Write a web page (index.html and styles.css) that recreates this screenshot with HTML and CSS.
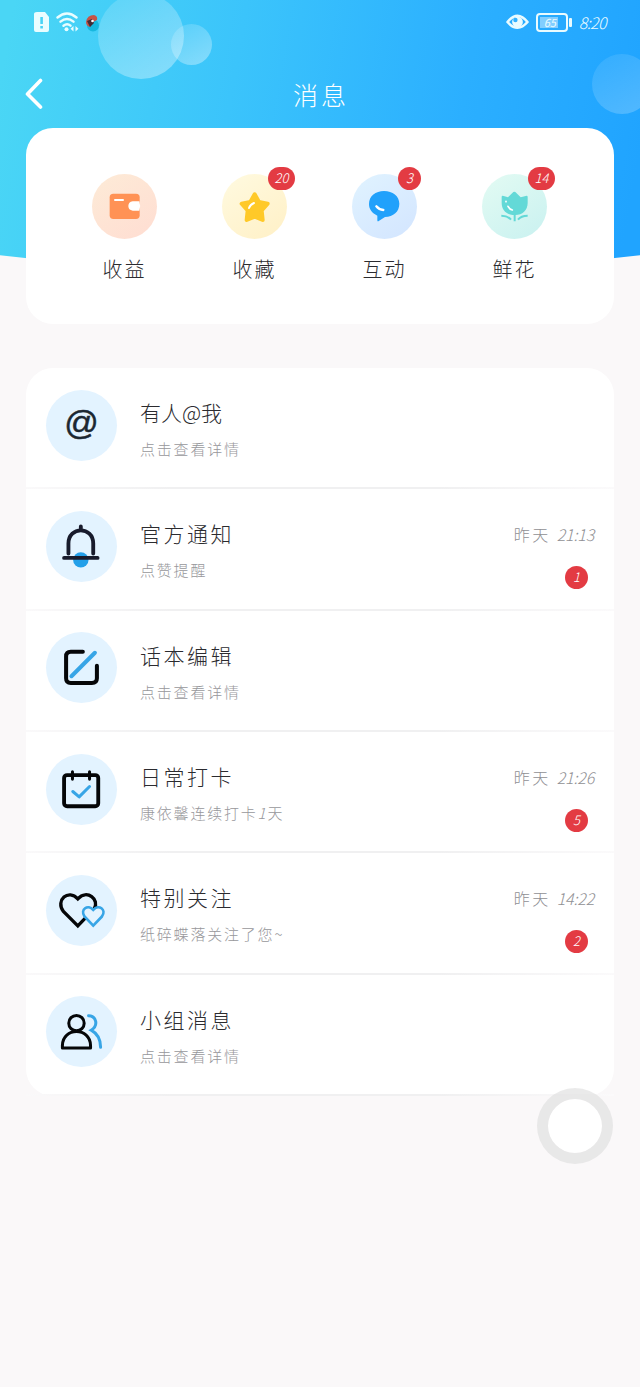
FILE: index.html
```
<!DOCTYPE html>
<html lang="zh-CN">
<head>
<meta charset="utf-8">
<title>消息</title>
<link rel="stylesheet" href="styles.css">
</head>
<body>
<div class="page">
  <div class="backdrop">
    <i class="bubble bubble-big"></i><i class="bubble bubble-small"></i><i class="bubble bubble-right"></i>
  </div>
  <div class="status">
    <svg class="status-left" width="70" height="24" viewBox="0 0 70 24">
      <path fill="#e9fdff" fill-rule="evenodd" d="M4 2h8l4 5v13q0 2-2 2H3q-2 0-2-2V4q0-2 3-2zM7.300 7v7h2.600V7zM7.300 16v2.600h2.600V16z"/>
      <g fill="none" stroke="#e9fdff" stroke-width="2.400" stroke-linecap="round"><path d="M24.500 7.500q9.500-8 19 0M27.500 11.700q6.500-5.600 13 0M30.500 15.700q3.700-3 7 0"/></g>
      <circle cx="33.500" cy="19.200" r="2" fill="#e9fdff"/><path fill="#e9fdff" d="M40.500 16v5.500l-3-2.700zM42.500 16v5.500l3-2.700z"/>
      <circle cx="60" cy="15.500" r="6" fill="#17b8df"/><path fill="#c65448" d="M53 12q1-7 8-7 4 1 3 5l-4 2-3 5q-4-1-4-5z"/><path fill="#442b36" d="M54 11l5-2 2 4-4 4z"/><circle cx="59.500" cy="11" r="1.300" fill="#fff"/>
    </svg>
    <div class="status-right">
      <svg width="23" height="16" viewBox="0 0 23 16"><path fill="none" stroke="#e9fbff" stroke-width="2.600" stroke-linejoin="round" d="M1.500 8Q11.500-4.500 21.500 8 11.500 19.500 1.500 8z"/><circle cx="11.500" cy="8" r="5.400" fill="#e9fbff"/><circle cx="9.400" cy="6" r="2.200" fill="#32b0ff"/></svg>
      <span class="battery"><b>65</b></span>
      <span class="clock">8:20</span>
    </div>
  </div>
  <header class="navbar">
    <svg width="18" height="32" viewBox="0 0 18 32"><path d="M15.500 2.500L2.500 16l13 13" fill="none" stroke="#fff" stroke-width="3.600" stroke-linecap="round" stroke-linejoin="round"/></svg>
    <h1>消息</h1>
  </header>
  <nav class="shortcuts">
    <a class="shortcut"><span class="disc peach"><svg viewBox="38 42 195 195"><rect x="91" y="101" width="90" height="76" rx="11" fill="#ff9255"/><path d="M107 120h24" stroke="#fff" stroke-width="6" stroke-linecap="round"/><path fill="#fff" d="M160 124h20q5 14 0 28h-20q-13-2-13-14t13-14z"/></svg></span><span class="label">收益</span></a>
    <a class="shortcut"><span class="disc yellow"><svg viewBox="427 42 195 195"><path d="M525 103l13 23 26 5-18 20 3 29-24-10-24 10 3-29-18-20 26-5z" fill="#ffc928" stroke="#ffc928" stroke-width="12" stroke-linejoin="round"/><path d="M508 144q4-11 15-15" fill="none" stroke="#fff" stroke-width="6" stroke-linecap="round"/></svg><em class="badge wide">20</em></span><span class="label">收藏</span></a>
    <a class="shortcut"><span class="disc blue"><svg viewBox="38 42 195 195"><path d="M134 93c26 0 46 15 46 38 0 24-18 39-43 40l-20 13q-3 1-3-3v-14c-16-8-25-19-25-35 0-24 20-39 45-39z" fill="#21a1fb"/><path d="M111 139q8 10 21 11" fill="none" stroke="#fff" stroke-width="7" stroke-linecap="round"/></svg><em class="badge">3</em></span><span class="label">互动</span></a>
    <a class="shortcut"><span class="disc mint"><svg viewBox="428 42 195 195"><path d="M487 111q0-6 6-3l13 4 16-16q3-2 6 0l16 16 15-4q6-2 6 3v18c0 22-16 36-37 36h-4-4c-20-2-33-16-33-36z" fill="#63d9d7"/><path d="M506 139q5 9 13 11M500 124v1" fill="none" stroke="#fff" stroke-width="5" stroke-linecap="round"/><path d="M526 160v24M486 167q19 0 29 12M565 167q-20 0-29 12" fill="none" stroke="#63d9d7" stroke-width="6"/></svg><em class="badge wide">14</em></span><span class="label">鲜花</span></a>
  </nav>
  <main class="list">
    <section class="row"><span class="avatar at">@</span><div class="body"><h2>有人@我</h2><p>点击查看详情</p></div></section>
    <section class="row"><span class="avatar"><svg viewBox="50 63 212 212"><circle cx="154" cy="209" r="23" fill="#239fe9"/><g fill="none" stroke="#181b2c" stroke-width="11.500" stroke-linecap="round"><path d="M117 190v-30c0-52 74-52 74 0v30M154 109v10M104 203h100"/></g></svg></span><div class="body"><h2>官方通知</h2><p>点赞提醒</p></div><div class="meta"><time>昨天 <i>21:13</i></time><em class="badge">1</em></div></section>
    <section class="row"><span class="avatar"><svg viewBox="50 36 212 212"><g fill="none" stroke-width="12" stroke-linecap="round" stroke-linejoin="round"><path stroke="#050608" d="M160 95h-36q-14 0-14 14v65q0 14 14 14h63q15 0 15-14v-37"/><path stroke="#38a5e6" d="M126 168l70-70"/></g></svg></span><div class="body"><h2>话本编辑</h2><p>点击查看详情</p></div></section>
    <section class="row"><span class="avatar"><svg viewBox="50 401 212 212"><g fill="none" stroke-width="11.500" stroke-linecap="round" stroke-linejoin="round"><rect x="104" y="464" width="102" height="93" rx="9" stroke="#050608"/><path stroke="#050608" stroke-width="9" d="M129 454v22M180 454v22"/><path stroke="#38a5e6" stroke-width="9" d="M130 513l19 16 31-31"/></g></svg></span><div class="body"><h2>日常打卡</h2><p>康依馨连续打卡<i>1</i>天</p></div><div class="meta"><time>昨天 <i>21:26</i></time><em class="badge">5</em></div></section>
    <section class="row"><span class="avatar"><svg viewBox="50 43 212 212"><path fill="none" stroke="#050608" stroke-width="10" d="M145 195l-43-43c-25-33 15-69 43-38 28-30 66 3 49 30z"/><path fill="#e5f4ff" stroke="#38a5e6" stroke-width="8" d="M191 194l-26-27c-14-21 10-38 26-20 16-18 41-1 26 20z"/></svg></span><div class="body"><h2>特别关注</h2><p>纸碎蝶落关注了您~</p></div><div class="meta"><time>昨天 <i>14:22</i></time><em class="badge">2</em></div></section>
    <section class="row"><span class="avatar"><svg viewBox="50 408 212 212"><g fill="none" stroke="#050608" stroke-width="9"><circle cx="141" cy="489" r="23"/><path stroke-linejoin="round" d="M99 563v-7c0-56 84-56 84 0v7z"/></g><path fill="none" stroke="#38a5e6" stroke-width="9" stroke-linecap="round" d="M177 467c24 1 30 29 8 43 20 11 28 27 28 51"/></svg></span><div class="body"><h2>小组消息</h2><p>点击查看详情</p></div></section>
  </main>
  <div class="assist"></div>
</div>
</body>
</html>
```
FILE: styles.css
```
* { box-sizing: border-box; margin: 0; padding: 0; }
body { background: #faf8f9; font-family: "Noto Sans CJK SC", sans-serif; font-weight: 300; color: #2b2b2f; }
.page { position: relative; height: 1387px; overflow: hidden; padding: 0 26px; }
svg { display: block; }
i, em { font-style: italic; }

.backdrop { position: absolute; inset: 0 0 auto 0; height: 273px; overflow: hidden; background: linear-gradient(100deg, #4ad6f5 2%, #3bc4fb 36%, #2bafff 70%, #20a4ff 97%); clip-path: ellipse(900px 273px at 50% 0); }
.bubble { position: absolute; border-radius: 50%; background: linear-gradient(150deg, rgba(255,255,255,.12), rgba(255,255,255,.38)); }
.bubble-big { left: 98px; top: -7px; width: 86px; height: 86px; }
.bubble-small { left: 171px; top: 24px; width: 41px; height: 41px; }
.bubble-right { left: 592px; top: 54px; width: 60px; height: 60px; opacity: .6; }

.status { position: relative; height: 44px; padding: 0 8px 0 7px; display: flex; align-items: center; justify-content: space-between; color: #e9fbff; }
.status-right { display: flex; align-items: center; }
.battery { position: relative; width: 32px; height: 19px; margin: 0 11px 0 7px; padding: 2px; border: 2px solid #e9fbff; border-radius: 4px; }
.battery::after { content: ""; position: absolute; right: -6px; top: 3px; width: 3px; height: 9px; border-radius: 1px; background: #e9fbff; }
.battery b { display: block; width: 18px; height: 11px; padding-left: 4px; background: #82ceff; font: italic 400 11px/11px "Noto Sans CJK SC", sans-serif; }
.clock { font-size: 16px; font-style: italic; line-height: 20px; letter-spacing: -.6px; }

.navbar { position: relative; height: 84px; display: flex; align-items: center; }
.navbar svg { margin-top: 16px; margin-left: -1px; }
.navbar h1 { flex: 1; margin: 16px 15px 0 0; text-align: center; font-size: 25px; line-height: 34px; font-weight: 300; letter-spacing: 3px; color: #fff; }

.shortcuts { position: relative; height: 196px; padding: 46px 33.500px 0; display: grid; grid-template-columns: repeat(4, 130px); border-radius: 27px; background: #fff; }
.shortcut { display: flex; flex-direction: column; align-items: center; }
.disc { position: relative; width: 65px; height: 65px; border-radius: 50%; }
.disc svg { width: 65px; height: 65px; }
.peach { background: linear-gradient(145deg, #fdebd7, #ffddd2); }
.yellow { background: linear-gradient(145deg, #fffae0, #fff0c6); }
.blue { background: linear-gradient(145deg, #e0f3ff, #d3e5ff); }
.mint { background: linear-gradient(145deg, #e3fbf3, #c9f1f0); }
.label { margin-top: 16px; font-size: 20px; line-height: 28px; letter-spacing: 2px; }
.badge { width: 23px; height: 23px; border-radius: 12px; background: #e33b43; color: #fff; font-size: 13px; line-height: 22px; text-align: center; }
.badge.wide { width: 27px; }
.disc .badge { position: absolute; left: 46px; top: -7px; }

.list { position: relative; height: 728px; margin-top: 44px; display: grid; grid-template-rows: repeat(6, 1fr); border-radius: 27px; background: #fff; }
.row { padding: 0 20px; display: flex; border-bottom: 2px solid transparent; border-image: linear-gradient(90deg, #faf9fa, #f0f0f1 25%, #f0f0f1 70%, #fbfafb) 1; border-width: 0 0 2px; }
.avatar { width: 71px; height: 71px; margin-top: 21.500px; flex: none; border-radius: 50%; background: #e3f3ff; }
.avatar svg { width: 71px; height: 71px; }
.at { font: 400 34px/65px "Liberation Sans", sans-serif; text-align: center; color: #1b2731; -webkit-text-stroke: .5px #1b2731; }
.body { flex: 1; padding: 29px 0 0 23px; }
.body h2 { font-size: 21px; line-height: 30px; font-weight: 300; letter-spacing: 2.500px; }
.body p { margin-top: 10px; font-size: 15px; line-height: 24px; letter-spacing: 1.800px; color: #97979b; }
.meta { display: flex; flex-direction: column; align-items: flex-end; padding-top: 33px; }
.meta time { font-size: 16px; line-height: 24px; letter-spacing: 2.500px; color: #909094; }
.meta time i { letter-spacing: -.2px; }
.meta .badge { margin: 20px 6px 0 0; }
.row:first-child h2 { letter-spacing: 0; }

.assist { position: absolute; left: 537px; top: 1088px; width: 76px; height: 76px; border: 11px solid rgba(222,222,222,.65); border-radius: 50%; background: #fff; background-clip: padding-box; }
```
